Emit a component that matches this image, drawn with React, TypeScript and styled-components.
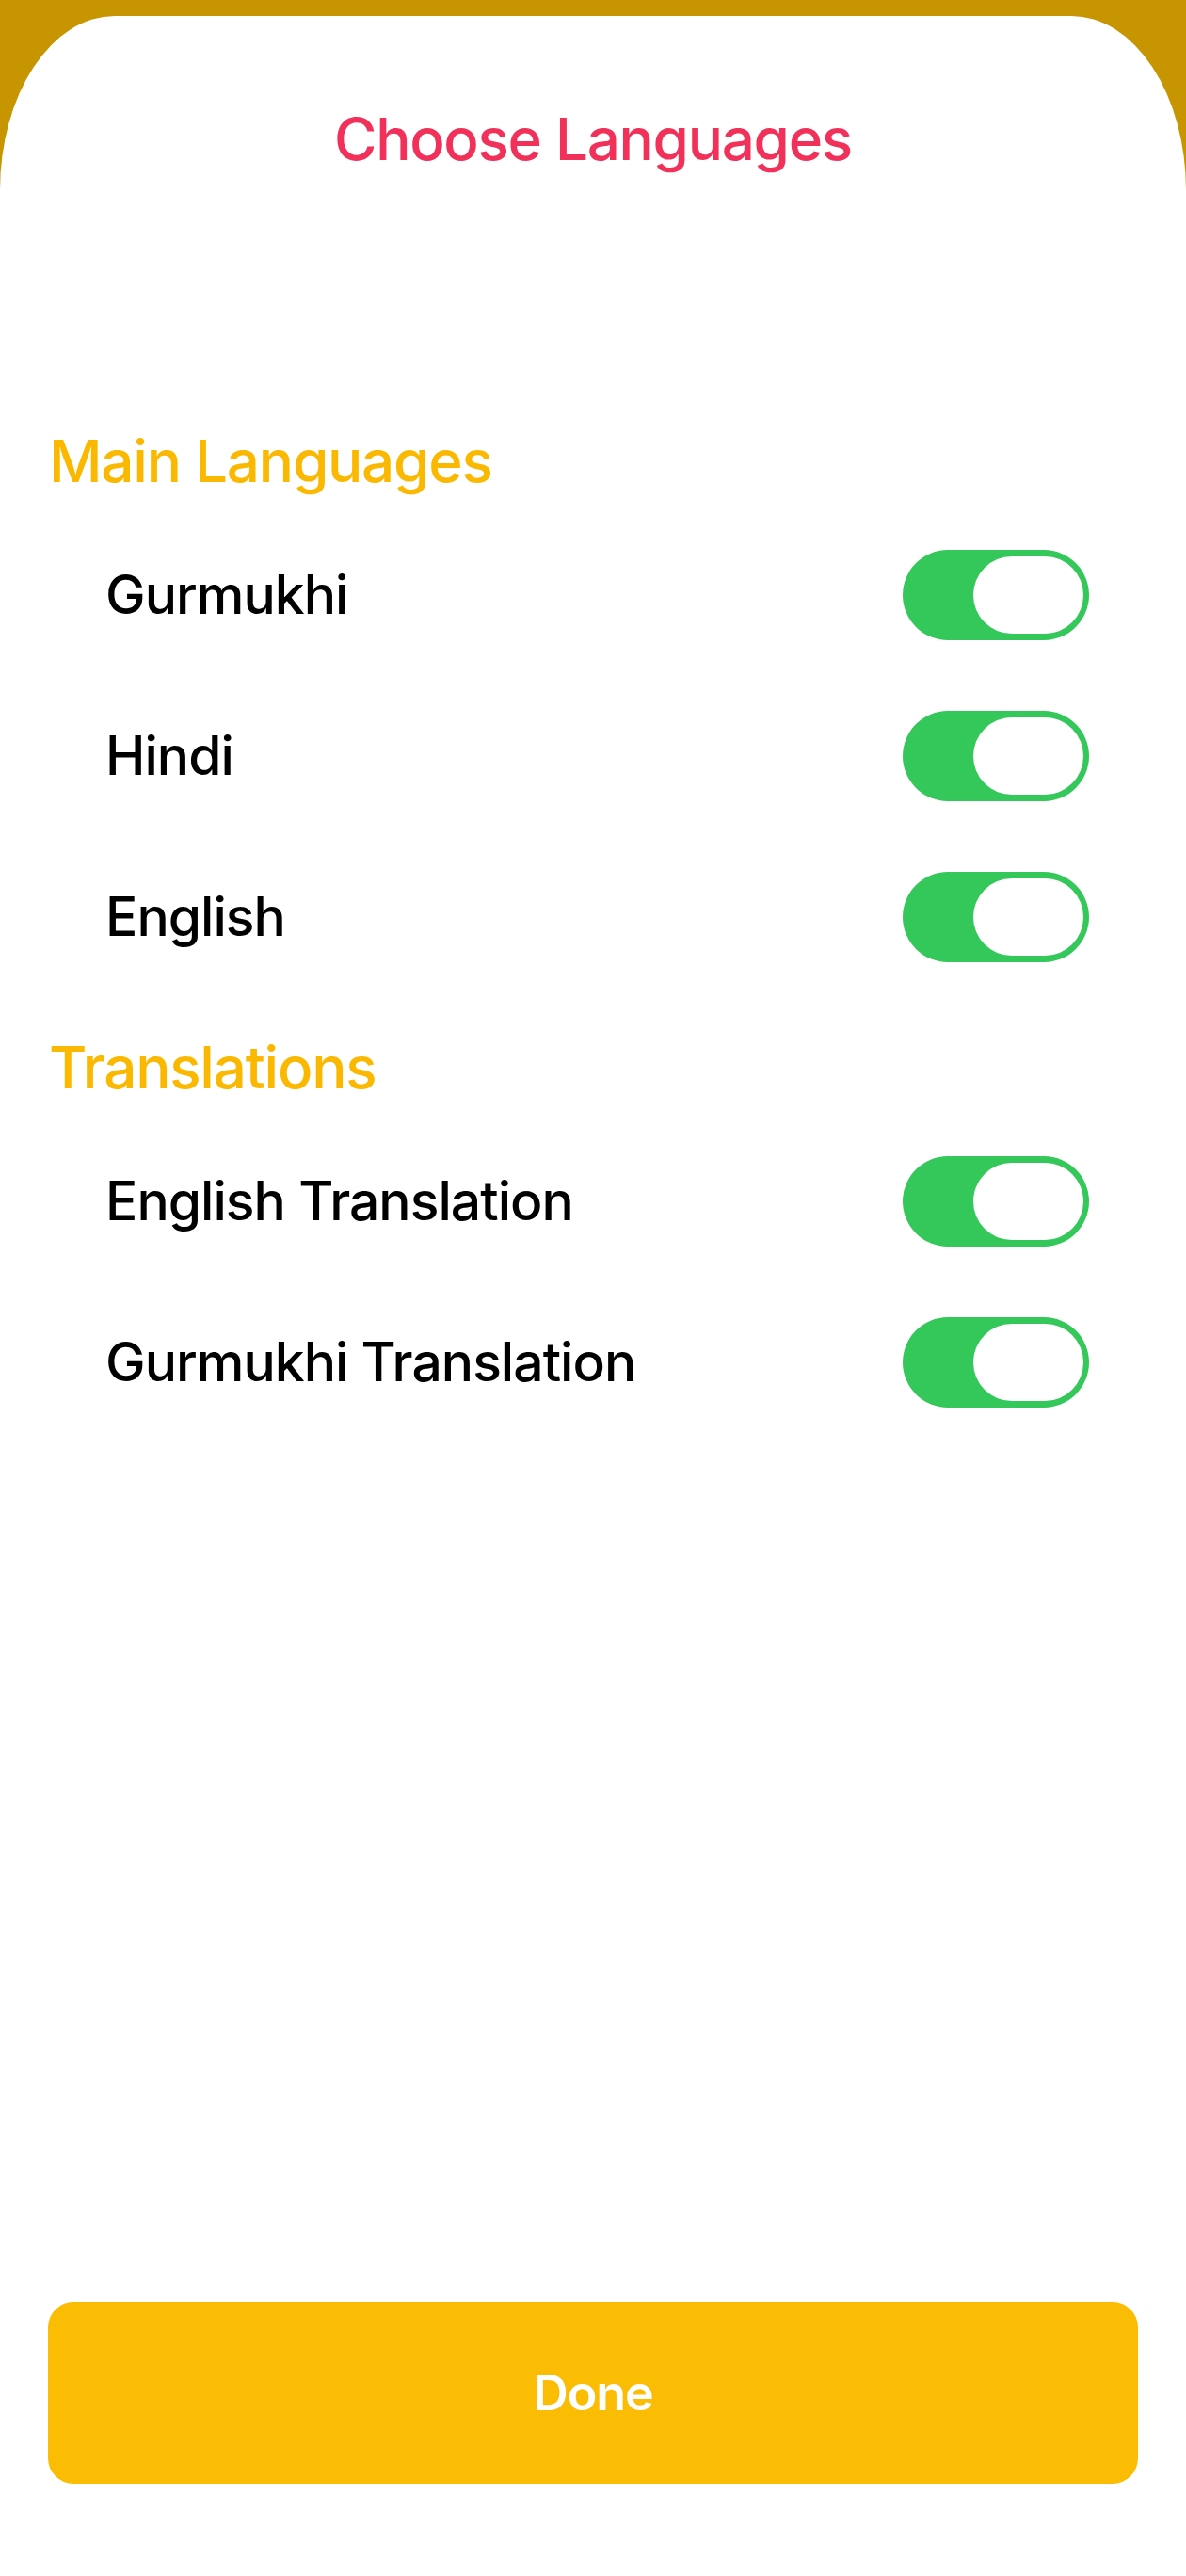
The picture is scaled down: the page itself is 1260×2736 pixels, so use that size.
import React, { useState } from "react";
import styled, { createGlobalStyle } from "styled-components";

const GlobalStyle = createGlobalStyle`
  html, body {
    margin: 0;
    padding: 0;
    background: #c79500;
  }
  body {
    font-family: Inter, "Noto Sans", Roboto, sans-serif;
    -webkit-font-smoothing: antialiased;
  }
  * {
    box-sizing: border-box;
  }
`;

const Screen = styled.div`
  min-height: 2736px;
  padding-top: 17px;
  display: flex;
  flex-direction: column;
`;

const Sheet = styled.div`
  flex: 1;
  display: flex;
  flex-direction: column;
  background: #ffffff;
  border-top-left-radius: 122px 185px;
  border-top-right-radius: 122px 185px;
  padding-top: 91px;
`;

const Title = styled.h1`
  margin: 0;
  height: 80px;
  line-height: 80px;
  text-align: center;
  font-size: 62px;
  font-weight: 500;
  letter-spacing: -0.021em;
  color: #f2315a;
`;

const Content = styled.div`
  margin-top: 244px;
  display: flex;
  flex-direction: column;
  gap: 17px;
`;

const Section = styled.section`
  display: flex;
  flex-direction: column;
`;

const SectionHeader = styled.h2`
  margin: 0;
  height: 114px;
  display: flex;
  align-items: center;
  padding-left: 52px;
  font-size: 62px;
  font-weight: 500;
  letter-spacing: -0.02em;
  color: #fbb800;
`;

const Row = styled.div`
  height: 171px;
  display: flex;
  align-items: center;
  justify-content: space-between;
  padding: 0 103px 0 112px;
`;

const Label = styled.span`
  font-size: 57px;
  font-weight: 500;
  letter-spacing: -0.017em;
  color: #000000;
`;

const Track = styled.button<{ $on: boolean }>`
  width: 198px;
  height: 96px;
  border: none;
  border-radius: 48px;
  padding: 7px 6px;
  display: flex;
  justify-content: ${(p) => (p.$on ? "flex-end" : "flex-start")};
  align-items: stretch;
  background: ${(p) => (p.$on ? "#34c759" : "#e5e5ea")};
  cursor: pointer;
`;

const Knob = styled.span`
  width: 117px;
  border-radius: 41px;
  background: #ffffff;
`;

const Spacer = styled.div`
  flex: 1;
`;

const DoneButton = styled.button`
  margin: 0 51px 98px;
  height: 193px;
  border: none;
  border-radius: 27px;
  background: #fbbc04;
  color: #ffffff;
  font-family: Inter, "Noto Sans", sans-serif;
  font-size: 52px;
  font-weight: 600;
  letter-spacing: -0.02em;
  cursor: pointer;
`;

interface Option {
  key: string;
  label: string;
}

const mainLanguages: Option[] = [
  { key: "gurmukhi", label: "Gurmukhi" },
  { key: "hindi", label: "Hindi" },
  { key: "english", label: "English" },
];

const translations: Option[] = [
  { key: "englishTranslation", label: "English Translation" },
  { key: "gurmukhiTranslation", label: "Gurmukhi Translation" },
];

const App: React.FC = () => {
  const [enabled, setEnabled] = useState<Record<string, boolean>>({
    gurmukhi: true,
    hindi: true,
    english: true,
    englishTranslation: true,
    gurmukhiTranslation: true,
  });

  const toggle = (key: string) => {
    setEnabled((prev) => ({ ...prev, [key]: !prev[key] }));
  };

  const renderRows = (options: Option[]) =>
    options.map((opt) => (
      <Row key={opt.key}>
        <Label>{opt.label}</Label>
        <Track
          type="button"
          $on={enabled[opt.key]}
          onClick={() => toggle(opt.key)}
          aria-label={opt.label}
        >
          <Knob />
        </Track>
      </Row>
    ));

  return (
    <>
      <GlobalStyle />
      <Screen>
        <Sheet>
          <Title>Choose Languages</Title>
          <Content>
            <Section>
              <SectionHeader>Main Languages</SectionHeader>
              {renderRows(mainLanguages)}
            </Section>
            <Section>
              <SectionHeader>Translations</SectionHeader>
              {renderRows(translations)}
            </Section>
          </Content>
          <Spacer />
          <DoneButton type="button">Done</DoneButton>
        </Sheet>
      </Screen>
    </>
  );
};

export default App;
